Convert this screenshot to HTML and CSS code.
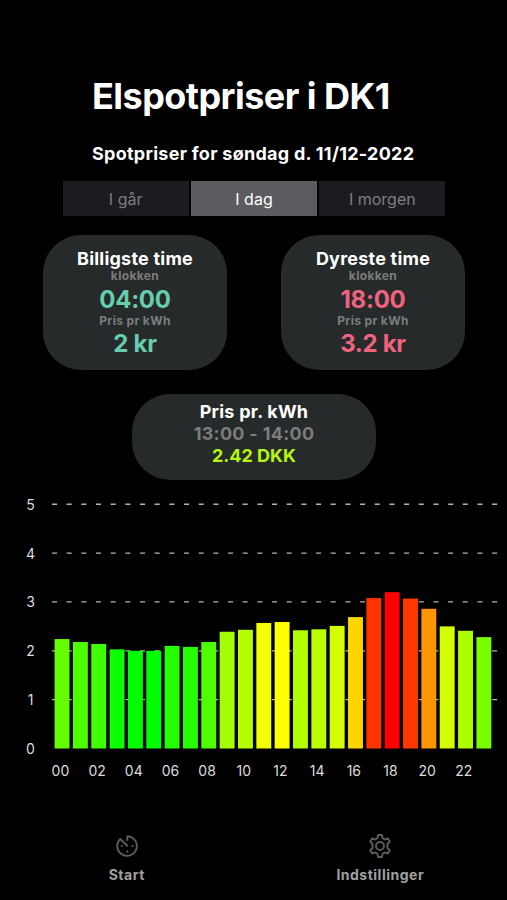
FILE: index.html
```html
<!DOCTYPE html>
<html lang="da">
<head>
    <meta charset="UTF-8">
    <meta name="viewport" content="width=device-width, initial-scale=1.0">
    <title>Elspotpriser i DK1</title>
    <link rel="stylesheet" href="styles.css">
</head>
<body>
    <main class="container">
        <header class="header">
            <h1>Elspotpriser i DK1</h1>
            <h2>Spotpriser for søndag d. 11/12-2022</h2>
        </header>

        <div class="day-picker">
            <button class="day">I går</button>
            <button class="day active">I dag</button>
            <button class="day">I morgen</button>
        </div>

        <div class="card-row">
            <section class="card">
                <h3>Billigste time</h3>
                <span class="label">klokken</span>
                <span class="value low">04:00</span>
                <span class="label">Pris pr kWh</span>
                <span class="value low price">2 kr</span>
            </section>
            <section class="card">
                <h3>Dyreste time</h3>
                <span class="label">klokken</span>
                <span class="value high">18:00</span>
                <span class="label">Pris pr kWh</span>
                <span class="value high price">3.2 kr</span>
            </section>
        </div>

        <section class="card current">
            <h3>Pris pr. kWh</h3>
            <span class="period">13:00 - 14:00</span>
            <span class="now">2.42 DKK</span>
        </section>

        <svg class="chart" id="chart" width="507" height="310" viewBox="0 490 507 310"></svg>
    </main>

    <nav class="tab-bar">
        <a class="tab" href="#">
            <svg width="24" height="24" viewBox="0 0 24 24">
                <path d="M12.3 6V2.2A9.8 9.8 0 1 1 5.2 5L12.3 11.8"/>
                <circle class="dot" cx="6.8" cy="12" r="1.1"/>
                <circle class="dot" cx="17.6" cy="12" r="1.1"/>
                <circle class="dot" cx="12.3" cy="17.6" r="1.1"/>
            </svg>
            <span>Start</span>
        </a>
        <a class="tab" href="#">
            <svg width="24" height="24" viewBox="0 0 24 24">
                <path d="M10.1 1h3.8l.7 3.2 2.2 1.3 3.1-1 1.9 3.3-2.4 2.2v4l2.4 2.2-1.9 3.3-3.1-1-2.2 1.3-.7 3.2h-3.8l-.7-3.2-2.2-1.3-3.1 1-1.9-3.3L4.6 14v-4L2.2 7.8l1.9-3.3 3.1 1 2.2-1.3z"/>
                <circle cx="12" cy="12" r="4"/>
            </svg>
            <span>Indstillinger</span>
        </a>
    </nav>

    <script src="chart.js"></script>
</body>
</html>
```
FILE: styles.css
```css
* {
    box-sizing: border-box;
    margin: 0;
    padding: 0;
}
body {
    width: 507px;
    height: 900px;
    display: flex;
    flex-direction: column;
    justify-content: space-between;
    font-family: Inter, 'Liberation Sans', sans-serif;
    background-color: #000;
    color: #fff;
    overflow: hidden;
}
.container {
    display: flex;
    flex-direction: column;
}
.header {
    padding: 74px 0 0 92px;
}
h1 {
    font-size: 36px;
    line-height: 44px;
    font-weight: 700;
    letter-spacing: -0.55px;
    white-space: nowrap;
}
h2 {
    margin-top: 24px;
    font-size: 18px;
    line-height: 24px;
    font-weight: 700;
    letter-spacing: 0.27px;
    white-space: nowrap;
}
.day-picker {
    display: flex;
    gap: 2px;
    width: 383px;
    margin: 15px 0 0 62.5px;
}
.day {
    flex: 1;
    height: 35px;
    border: none;
    background-color: #1c1b1f;
    color: #7e7e82;
    font-family: inherit;
    font-size: 16px;
}
.day.active {
    background-color: #5c5b5f;
    color: #fff;
}
.card-row {
    display: flex;
    gap: 54px;
    padding: 19px 0 0 43px;
}
.card {
    display: flex;
    flex-direction: column;
    align-items: center;
    width: 184px;
    height: 135px;
    padding-top: 13px;
    border-radius: 38px;
    background-color: #262a2a;
    font-weight: 700;
    white-space: nowrap;
}
.card h3 {
    font-size: 18px;
    line-height: 22px;
    font-weight: 700;
    letter-spacing: 0.22px;
}
.label {
    color: #7b7d7d;
    font-size: 12px;
    line-height: 12px;
    letter-spacing: 0.35px;
}
.value {
    font-size: 24px;
    line-height: 33px;
    padding-top: 1px;
    margin-bottom: -1px;
    letter-spacing: -0.3px;
}
.price {
    line-height: 32px;
}
.low {
    color: #66ceac;
}
.high {
    color: #f0637f;
}
.current {
    width: 244px;
    height: 86px;
    margin: 24px 0 0 132px;
    padding-top: 7px;
}
.period {
    color: #7b7d7d;
    font-size: 18px;
    line-height: 22px;
    letter-spacing: 0.3px;
}
.now {
    color: #b6f50f;
    font-size: 18px;
    line-height: 22px;
}
.chart {
    display: block;
    margin-top: 10px;
}
.chart line {
    stroke: #b4b4b4;
    stroke-width: 1.3;
    stroke-dasharray: 5 9.67;
}
.chart text {
    fill: #dcdcdc;
    font-size: 14px;
    text-anchor: middle;
}
.tab-bar {
    display: flex;
    height: 68px;
}
.tab {
    flex: 1;
    display: flex;
    flex-direction: column;
    align-items: center;
    gap: 8px;
    padding-top: 2px;
    color: #a0a0a0;
    font-size: 14px;
    line-height: 18px;
    font-weight: 700;
    letter-spacing: 0.5px;
    text-decoration: none;
}
.tab svg {
    fill: none;
    stroke: #5c5c5c;
    stroke-width: 1.9;
    stroke-linecap: round;
    stroke-linejoin: round;
}
.tab .dot {
    fill: #5c5c5c;
    stroke: none;
}
```
FILE: chart.js
```javascript
const prices = [
    [2.24, '#66ff00'], [2.18, '#4dff00'], [2.14, '#40ff00'], [2.03, '#0dff00'],
    [2.00, '#00ff00'], [2.00, '#00ff00'], [2.10, '#26ff00'], [2.08, '#26ff00'],
    [2.18, '#4dff00'], [2.39, '#a6ff00'], [2.43, '#b3ff00'], [2.57, '#f2ff00'],
    [2.59, '#ffff00'], [2.42, '#b3ff00'], [2.44, '#b8ff00'], [2.51, '#d4ff00'],
    [2.69, '#ffd500'], [3.08, '#ff3300'], [3.20, '#ff0000'], [3.07, '#ff3800'],
    [2.86, '#ff9500'], [2.50, '#d4ff00'], [2.41, '#adff00'], [2.28, '#77ff00']
];
const baseY = 748.5;
const unit = 48.85;
const step = 18.34;
let markup = '';

// Grid lines and y axis
for (let i = 0; i <= 5; i++) {
    const y = baseY - i * unit;
    if (i > 0) markup += `<line x1="52" x2="498" y1="${y}" y2="${y}"/>`;
    markup += `<text x="30.5" y="${y + 5.5}">${i}</text>`;
}

// Bars, with a label for every second hour
prices.forEach(([price, color], hour) => {
    const x = 54.6 + hour * step;
    const h = price * unit;
    markup += `<rect x="${x}" y="${baseY - h}" width="14.9" height="${h}" fill="${color}"/>`;
    if (hour % 2 === 0) {
        markup += `<text x="${x + 5.8}" y="776">${String(hour).padStart(2, '0')}</text>`;
    }
});

document.getElementById('chart').innerHTML = markup;
```
